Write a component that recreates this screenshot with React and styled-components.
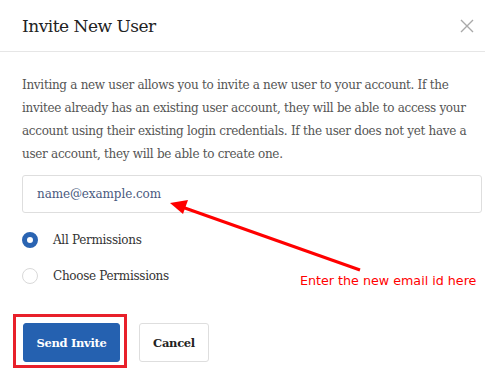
import styled, { createGlobalStyle } from "styled-components";

const GlobalStyle = createGlobalStyle`
  body {
    margin: 0;
    background: #ffffff;
    font-family: "DejaVu Serif", "Liberation Serif", serif;
  }
`;

const Dialog = styled.div`
  position: relative;
  width: 485px;
  height: 381px;
  overflow: hidden;
  background: #ffffff;
`;

const Header = styled.div`
  display: flex;
  align-items: center;
  justify-content: space-between;
  height: 52px;
  padding: 0 11px 0 22px;
  border-bottom: 1px solid #e6e6e6;
  box-sizing: border-box;
`;

const Title = styled.h2`
  margin: 0;
  font-size: 17px;
  font-weight: normal;
  letter-spacing: -0.5px;
  color: #222;
`;

const CloseButton = styled.button`
  display: flex;
  border: none;
  background: none;
  padding: 0;
  cursor: pointer;
`;

const Body = styled.div`
  padding: 22px 3px 0 22px;
`;

const Intro = styled.p`
  margin: 0;
  font-size: 12px;
  letter-spacing: -0.3px;
  line-height: 23px;
  color: #555;
  white-space: nowrap;
`;

const EmailInput = styled.input`
  display: block;
  box-sizing: border-box;
  width: 100%;
  height: 38px;
  margin-top: 9px;
  padding: 0 14px;
  border: 1px solid #dedede;
  border-radius: 3px;
  font-family: inherit;
  font-size: 12px;
  letter-spacing: -0.1px;
  color: #333;
  outline: none;

  &::placeholder {
    color: #4a5a80;
  }
`;

const Options = styled.div`
  margin-top: 9px;
`;

const Option = styled.label`
  display: flex;
  align-items: center;
  gap: 15px;
  height: 36px;
  font-size: 12px;
  letter-spacing: -0.3px;
  color: #333;
  cursor: pointer;
`;

const Radio = styled.span`
  box-sizing: border-box;
  width: 16px;
  height: 16px;
  border-radius: 50%;
  background: #fff;
  border: ${(p) => (p.$checked ? "5px solid #2a64b2" : "1px solid #d9d9d9")};
`;

const Actions = styled.div`
  display: flex;
  gap: 19px;
  margin-top: 29px;
  padding-left: 1px;
`;

const Highlight = styled.div`
  position: relative;

  &::after {
    content: "";
    position: absolute;
    top: -9px;
    bottom: -6px;
    left: -10px;
    right: -7px;
    border: 3px solid #e8202a;
    pointer-events: none;
  }
`;

const Button = styled.button`
  box-sizing: border-box;
  height: 39px;
  width: ${(p) => p.$width}px;
  border-radius: 3px;
  font-family: inherit;
  font-size: 11.5px;
  font-weight: bold;
  letter-spacing: -0.3px;
  cursor: pointer;
  border: 1px solid ${(p) => (p.$primary ? "#2561b0" : "#dedede")};
  background: ${(p) => (p.$primary ? "#2561b0" : "#fff")};
  color: ${(p) => (p.$primary ? "#fff" : "#222")};
`;

const Note = styled.div`
  position: absolute;
  left: 300px;
  top: 272px;
  font-family: "DejaVu Sans", sans-serif;
  font-size: 12.7px;
  line-height: 18px;
  color: #ff0000;
  white-space: nowrap;
`;

const ArrowLayer = styled.svg`
  position: absolute;
  left: 0;
  top: 0;
  pointer-events: none;
`;

export default function App() {
  return (
    <>
      <GlobalStyle />
      <Dialog>
        <Header>
          <Title>Invite New User</Title>
          <CloseButton aria-label="Close">
            <svg width="14" height="14" viewBox="0 0 14 14">
              <path d="M1 1L13 13M13 1L1 13" stroke="#a9a9a9" strokeWidth="1.4" />
            </svg>
          </CloseButton>
        </Header>
        <Body>
          <Intro>
            Inviting a new user allows you to invite a new user to your account. If the
            <br />
            invitee already has an existing user account, they will be able to access your
            <br />
            account using their existing login credentials. If the user does not yet have a
            <br />
            user account, they will be able to create one.
          </Intro>
          <EmailInput type="email" placeholder="name@example.com" />
          <Options>
            <Option>
              <Radio $checked />
              All Permissions
            </Option>
            <Option>
              <Radio />
              Choose Permissions
            </Option>
          </Options>
          <Actions>
            <Highlight>
              <Button $primary $width={97}>Send Invite</Button>
            </Highlight>
            <Button $width={70}>Cancel</Button>
          </Actions>
        </Body>
        <ArrowLayer width="485" height="381">
          <line x1="360" y1="270" x2="182" y2="207" stroke="#ff0000" strokeWidth="3" />
          <polygon points="170,203 188,200 183,214" fill="#ff0000" />
        </ArrowLayer>
        <Note>Enter the new email id here</Note>
      </Dialog>
    </>
  );
}
